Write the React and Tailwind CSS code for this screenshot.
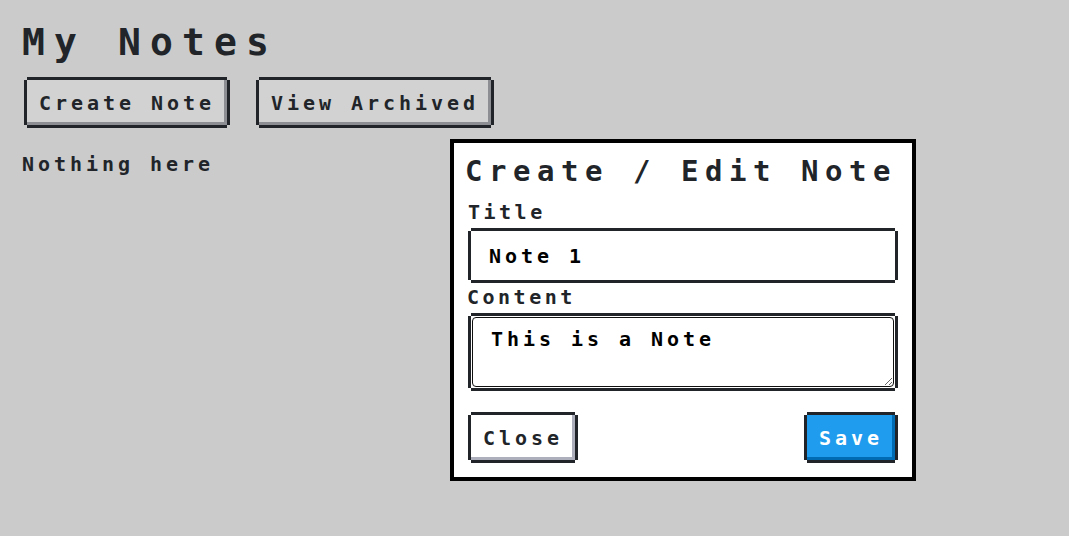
const frame = 'shadow-[0_-3px_0_0_#212529,0_3px_0_0_#212529,-3px_0_0_0_#212529,3px_0_0_0_#212529]';

function PixelButton({ children, className = '' }) {
  return (
    <button className={`h-[45px] m-[3px] px-[12px] flex items-center text-[20px] leading-[24px] tracking-[3.96px] font-bold ${className}`}>
      {children}
    </button>
  );
}

export default function App() {
  return (
    <div className="relative w-[1069px] h-[536px] bg-[#cbcbcb] text-[#212529] font-['DejaVu_Sans_Mono',monospace] pl-[21px] pt-[22px]">
      <h1 className="ml-[1px] text-[38px] leading-[40px] tracking-[9.12px] font-bold">My Notes</h1>

      <div className="flex gap-[26px] mt-[15px] ml-[3px]">
        <PixelButton className="bg-[#d2d2d2] shadow-[0_-3px_0_0_#212529,0_3px_0_0_#212529,-3px_0_0_0_#212529,3px_0_0_0_#212529,inset_-3px_-3px_0_0_#8d8e94]">
          Create Note
        </PixelButton>
        <PixelButton className="bg-[#d2d2d2] shadow-[0_-3px_0_0_#212529,0_3px_0_0_#212529,-3px_0_0_0_#212529,3px_0_0_0_#212529,inset_-3px_-3px_0_0_#8d8e94]">
          View Archived
        </PixelButton>
      </div>

      <p className="mt-[24px] ml-[1px] text-[20px] leading-[24px] tracking-[3.96px] font-bold">Nothing here</p>

      {/* dialog */}
      <div className="absolute left-[450px] top-[139px] w-[466px] h-[342px] bg-white border-[4px] border-black px-[14px] pt-[12px]">
        <h2 className="-ml-[3px] text-[29px] leading-[32px] tracking-[6.54px] font-bold whitespace-nowrap">Create / Edit Note</h2>

        <label className="block mt-[15px] text-[20px] leading-[20px] tracking-[3.5px] font-bold">Title</label>
        <div className={`mt-[9px] mx-[3px] h-[49px] bg-white flex items-center pl-[18px] ${frame}`}>
          <span className="text-[20px] leading-[24px] tracking-[3.96px] font-bold text-black">Note 1</span>
        </div>

        <label className="block mt-[7px] -ml-[1px] text-[20px] leading-[20px] tracking-[3.5px] font-bold">Content</label>
        <div className={`mt-[9px] mx-[3px] h-[72px] bg-white p-[1px] ${frame}`}>
          <textarea
            defaultValue="This is a Note"
            className="w-full h-full block rounded-[4px] border-[1.5px] border-[#101010] outline-none pl-[18px] pt-[9px] text-[20px] leading-[24px] tracking-[3.96px] font-bold text-black bg-white font-['DejaVu_Sans_Mono',monospace]"
          />
        </div>

        <div className="flex justify-between mt-[24px]">
          <PixelButton className="bg-white shadow-[0_-3px_0_0_#212529,0_3px_0_0_#212529,-3px_0_0_0_#212529,3px_0_0_0_#212529,inset_-3px_-3px_0_0_#adafbc]">
            Close
          </PixelButton>
          <PixelButton className="bg-[#209cee] text-white shadow-[0_-3px_0_0_#212529,0_3px_0_0_#212529,-3px_0_0_0_#212529,3px_0_0_0_#212529,inset_-3px_-3px_0_0_#006bb3]">
            Save
          </PixelButton>
        </div>
      </div>
    </div>
  );
}
